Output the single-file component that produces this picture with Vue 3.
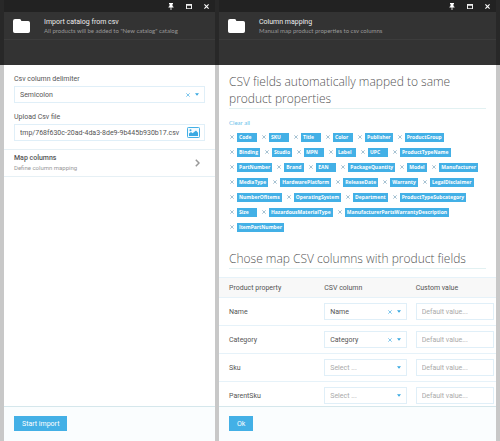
<script setup>
import { ref } from 'vue'

const delimiter = ref('Semicolon')
const file = ref('tmp/768f630c-20ad-4da3-8de9-9b445b930b17.csv')

const tagRows = ref([
  ['Code', 'SKU', 'Title', 'Color', 'Publisher', 'ProductGroup'],
  ['Binding', 'Studio', 'MPN', 'Label', 'UPC', 'ProductTypeName'],
  ['PartNumber', 'Brand', 'EAN', 'PackageQuantity', 'Model', 'Manufacturer'],
  ['MediaType', 'HardwarePlatform', 'ReleaseDate', 'Warranty', 'LegalDisclaimer'],
  ['NumberOfItems', 'OperatingSystem', 'Department', 'ProductTypeSubcategory'],
  ['Size', 'HazardousMaterialType', 'ManufacturerPartsWarrantyDescription'],
  ['ItemPartNumber'],
])

const properties = ref([
  { name: 'Name', column: 'Name', custom: '' },
  { name: 'Category', column: 'Category', custom: '' },
  { name: 'Sku', column: '', custom: '' },
  { name: 'ParentSku', column: '', custom: '' },
])

const blades = [
  { id: 'import', title: 'Import catalog from csv', sub: 'All products will be added to "New catalog" catalog', action: 'Start import' },
  { id: 'mapping', title: 'Column mapping', sub: 'Manual map product properties to csv columns', action: 'Ok' },
]

function removeTag(row, i) {
  row.splice(i, 1)
}
function clearAll() {
  tagRows.value = []
}
</script>

<template>
  <main class="app">
    <section v-for="b in blades" :key="b.id" class="blade" :class="b.id">
      <div class="bar">
        <button type="button" aria-label="Pin">
          <svg width="6" height="7" viewBox="0 0 6 7"><path d="M1 0h4v1H4.5v2L5.6 4v.6H3.4V7h-.8V4.6H.4V4l1.1-1V1H1z" fill="#fff" /></svg>
        </button>
        <button type="button" aria-label="Maximize">
          <svg width="6" height="5" viewBox="0 0 6 5"><path d="M0 0h6v5H0zM1 1.8v2.4h4V1.8z" fill="#eee" fill-rule="evenodd" /></svg>
        </button>
        <button type="button" aria-label="Close">
          <svg width="5" height="5" viewBox="0 0 5 5"><path d="M.4.4l4.2 4.2M4.6.4L.4 4.6" stroke="#fff" stroke-width="1.1" /></svg>
        </button>
      </div>
      <header class="head">
        <svg class="folder" width="17" height="14" viewBox="0 0 17 14"><path d="M2 0h4.6q1 0 1.4 1l.3 1h6.9Q17 2 17 3.8v8.4Q17 14 15.2 14H1.8Q0 14 0 12.2V2Q0 0 2 0z" fill="#fff" /></svg>
        <div>
          <h1>{{ b.title }}</h1>
          <p>{{ b.sub }}</p>
        </div>
      </header>
      <div class="toolbar"></div>

      <div v-if="b.id === 'import'" class="body">
        <form class="form" @submit.prevent>
          <label for="delimiter">Csv column delimiter</label>
          <div class="field">
            <select id="delimiter" v-model="delimiter">
              <option>Semicolon</option>
              <option>Comma</option>
            </select>
            <button type="button" class="x" aria-label="Clear delimiter"><svg width="4" height="4" viewBox="0 0 4 4"><path d="M.3.3l3.4 3.4M3.7.3L.3 3.7" /></svg></button>
            <svg class="caret" width="4" height="3" viewBox="0 0 4 3"><path d="M0 .3h4L2 2.8z" /></svg>
          </div>
          <label for="file">Upload Csv file</label>
          <div class="field upload">
            <input id="file" v-model="file" type="text">
            <button type="button" class="pick" aria-label="Choose file">
              <svg width="13" height="11" viewBox="0 0 13 11">
                <rect x=".5" y=".5" width="12" height="10" rx=".8" fill="#f4fbff" stroke="#43b0e6" />
                <path d="M2 9V6.5L4 5l1.6 1.2L9 3.4l2 2.4V9z" fill="#3aa9e2" />
                <circle cx="3.5" cy="3.2" r="1" fill="#3aa9e2" />
              </svg>
            </button>
          </div>
        </form>
        <a class="link" href="#mapping">
          <span>
            <strong>Map columns</strong>
            <small>Define column mapping</small>
          </span>
          <svg width="5" height="8" viewBox="0 0 5 8"><path d="M.8.7L4 4 .8 7.3" fill="none" stroke="#999" stroke-width="1.5" /></svg>
        </a>
      </div>

      <div v-else class="body">
        <div class="mapped">
          <h2>CSV fields automatically mapped to same product properties</h2>
          <button type="button" class="clear" @click="clearAll">Clear all</button>
          <ul v-for="(row, r) in tagRows" :key="r" class="tags">
            <li v-for="(t, i) in row" :key="t">
              <button type="button" class="x" :aria-label="'Remove ' + t" @click="removeTag(row, i)"><svg width="4" height="4" viewBox="0 0 4 4"><path d="M.3.3l3.4 3.4M3.7.3L.3 3.7" /></svg></button>
              <span>{{ t }}</span>
            </li>
          </ul>
          <h2 class="second">Chose map CSV columns with product fields</h2>
        </div>
        <table>
          <thead>
            <tr>
              <th class="prop">Product property</th>
              <th class="col">CSV column</th>
              <th>Custom value</th>
            </tr>
          </thead>
          <tbody>
            <tr v-for="p in properties" :key="p.name">
              <td>{{ p.name }}</td>
              <td>
                <div class="field">
                  <select v-model="p.column" :class="{ empty: !p.column }" :aria-label="p.name + ' column'">
                    <option value="">Select ...</option>
                    <option>Name</option>
                    <option>Category</option>
                  </select>
                  <button v-if="p.column" type="button" class="x" :aria-label="'Clear ' + p.name" @click="p.column = ''"><svg width="4" height="4" viewBox="0 0 4 4"><path d="M.3.3l3.4 3.4M3.7.3L.3 3.7" /></svg></button>
                  <svg class="caret" width="4" height="3" viewBox="0 0 4 3"><path d="M0 .3h4L2 2.8z" /></svg>
                </div>
              </td>
              <td>
                <div class="field">
                  <input v-model="p.custom" type="text" placeholder="Default value..." :aria-label="p.name + ' custom value'">
                </div>
              </td>
            </tr>
          </tbody>
        </table>
      </div>

      <footer>
        <button type="button">{{ b.action }}</button>
      </footer>
    </section>
  </main>
</template>

<style>
body {
  margin: 0;
}
</style>

<style scoped>
* {
  box-sizing: border-box;
}
.app {
  display: flex;
  gap: 4px;
  height: 100vh;
  padding: 0 4px;
  overflow: hidden;
  background: linear-gradient(#282828 65px, #c8c8c8 65px);
  color: #555;
  font: 7px/10px Roboto, "Noto Sans", sans-serif;
}
button, input, select {
  margin: 0;
  padding: 0;
  border: 0;
  background: none;
  color: inherit;
  font: inherit;
}
svg {
  display: block;
}
.blade {
  display: flex;
  flex-direction: column;
  min-width: 0;
  background: #fff;
}
.import {
  flex: 211;
}
.mapping {
  flex: 277;
}
.bar {
  display: flex;
  flex: none;
  align-items: center;
  justify-content: flex-end;
  gap: 12px;
  height: 12px;
  padding-right: 6px;
  background: #222;
}
.bar button,
.x {
  display: flex;
}
.head {
  display: flex;
  flex: none;
  align-items: center;
  gap: 14px;
  height: 28px;
  padding: 0 9px;
  border-bottom: 1px solid #3c3c3c;
  background: #333;
  white-space: nowrap;
}
.head h1 {
  margin: 0;
  padding-top: 1px;
  color: #eee;
  font-size: 7px;
  font-weight: 400;
  line-height: 9px;
}
.head p {
  margin: 0;
  color: #999;
  font: 6px/8px Lato, "Noto Sans", sans-serif;
}
.folder {
  flex: none;
}
.toolbar {
  flex: none;
  height: 25px;
  background: #333;
}
.body {
  flex: 1;
  min-height: 0;
  overflow: hidden;
}
.form {
  padding: 9px 10px 8px;
}
.form label {
  display: block;
  margin-bottom: 2px;
}
.form .field + label {
  margin-top: 9px;
}
.field {
  display: flex;
  align-items: center;
  height: 17px;
  padding: 0 5px;
  border: 1px solid #e0eff8;
  background: #fff;
}
.field select,
.field input {
  flex: 1;
  width: 0;
  min-width: 0;
  height: 15px;
  outline: 0;
  appearance: none;
}
.field select.empty,
.field input::placeholder {
  color: #aaa;
  opacity: 1;
}
.x {
  flex: none;
}
.x path {
  fill: none;
  stroke: #5fb9e8;
  stroke-width: 0.8;
}
.caret {
  flex: none;
  margin-left: 5px;
  fill: #38a8e0;
}
.upload {
  padding-right: 4px;
}
.link {
  display: flex;
  align-items: center;
  justify-content: space-between;
  height: 28px;
  padding: 0 15px 0 10px;
  border: solid #e6f0f5;
  border-width: 1px 0;
  color: inherit;
  text-decoration: none;
}
.link strong,
.link small {
  display: block;
  line-height: 9px;
}
.link strong {
  font-weight: 500;
}
.link small {
  color: #999;
  font-size: 6px;
}
.mapped {
  padding: 8px 10px;
}
h2 {
  margin: 0;
  padding-bottom: 1px;
  border-bottom: 1px solid #e2f1f2;
  color: #555;
  font: 300 12px/17px "Open Sans", "Noto Sans", sans-serif;
}
h2.second {
  margin-top: 13px;
}
.clear {
  display: block;
  margin: 9px 0 5px;
  color: #6cbfeb;
  font: 6px/9px Lato, "Noto Sans", sans-serif;
}
.tags {
  display: flex;
  gap: 5px;
  height: 15px;
  margin: 0;
  padding: 0 0 0 1px;
  list-style: none;
}
.tags li {
  display: flex;
  align-items: center;
  gap: 3px;
  height: 10px;
}
.tags .x path {
  stroke: #8fb3c6;
}
.tags span {
  min-width: 20px;
  padding: 0 2px;
  background: #43b0e6;
  color: #fff;
  font: 700 5px/9px "Open Sans", "Noto Sans", sans-serif;
}
table {
  width: 100%;
  border-collapse: collapse;
  table-layout: fixed;
}
tr {
  border-bottom: 1px solid #e6f2f9;
}
thead tr {
  border-top: 1px solid #e6f2f9;
  background: #f8f8f8;
}
th,
td {
  height: 28px;
  padding: 0 2px 0 0;
  text-align: left;
}
th {
  height: 20px;
  font-weight: 400;
}
td:first-child,
th:first-child {
  padding-left: 10px;
}
td:nth-child(2) {
  padding-right: 9px;
}
.prop {
  width: 38%;
}
.col {
  width: 33%;
}
footer {
  flex: none;
  height: 35px;
  padding: 9px 10px;
  border-top: 1px solid #d5e7ec;
  background: #fafdfe;
}
footer button {
  height: 15px;
  padding: 0 8px;
  background: #43b0e6;
  color: #fff;
}
</style>
